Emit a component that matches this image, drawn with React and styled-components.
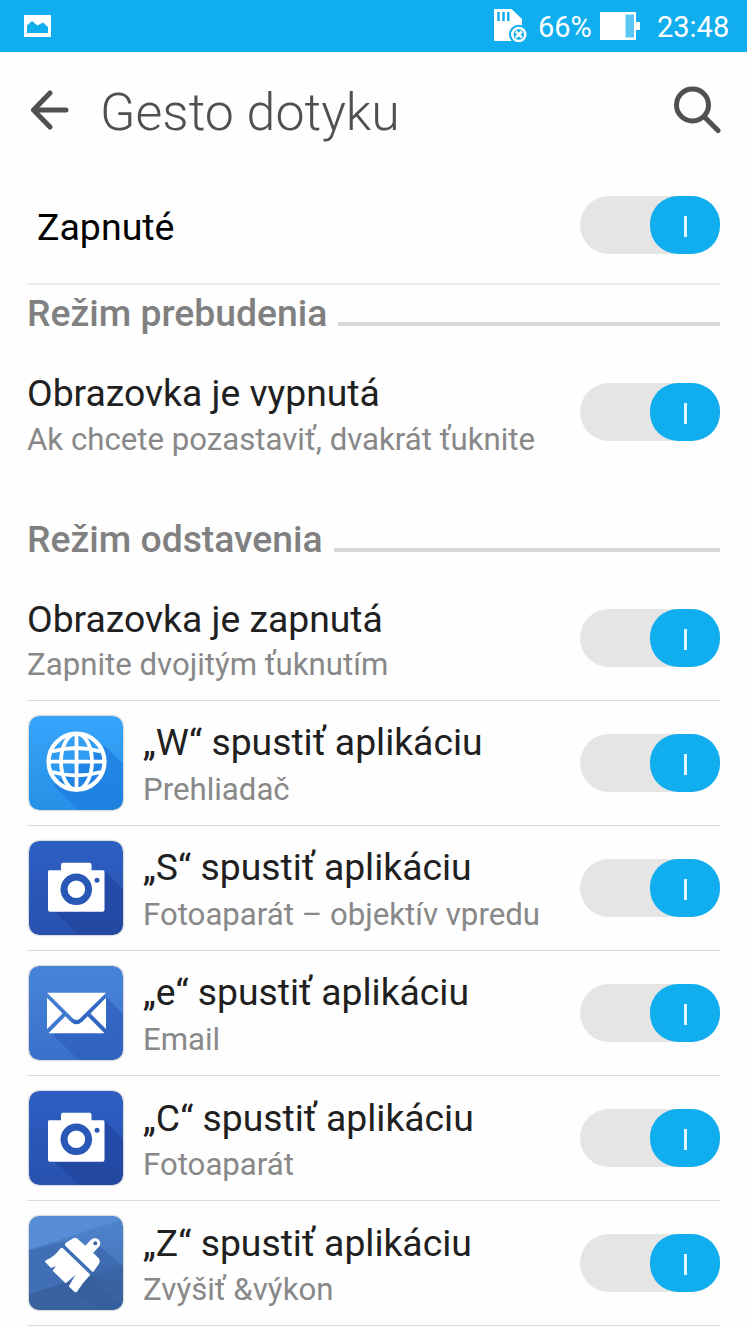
import React, { useState } from "react";
import styled, { createGlobalStyle } from "styled-components";

const apps = [
  { id: "w", icon: "browser", title: "„W“ spustiť aplikáciu", desc: "Prehliadač" },
  { id: "s", icon: "camera", title: "„S“ spustiť aplikáciu", desc: "Fotoaparát – objektív vpredu" },
  { id: "e", icon: "email", title: "„e“ spustiť aplikáciu", desc: "Email" },
  { id: "c", icon: "camera", title: "„C“ spustiť aplikáciu", desc: "Fotoaparát" },
  { id: "z", icon: "boost", title: "„Z“ spustiť aplikáciu", desc: "Zvýšiť &výkon" },
];

const tileColors = {
  browser: ["#37a5fb", "#2590e6", "#1b77dc"],
  camera: ["#2d5fc3", "#2852ae", "#20429a"],
  email: ["#4785d8", "#3a70ca", "#2b5abb"],
  boost: ["#4f84cc", "#3f6caf", "#3a649f"],
};

const Glyph = ({ name }) => {
  if (name === "browser") {
    return (
      <g fill="none" stroke="#fff" strokeWidth="3.8">
        <circle cx="47.5" cy="45.7" r="28" strokeWidth="4.2" />
        <ellipse cx="47.5" cy="45.7" rx="15.5" ry="28" />
        <path d="M47.5 18v56M19 45.7h57M23 35.500q24.500-7 49 0M23 56q24.500 7 49 0" />
      </g>
    );
  }
  if (name === "camera") {
    return (
      <>
        <path
          d="M20 29.3h12v-5.600q0-2 2-2h26.500q2 0 2 2v5.600H74q1.500 0 1.500 1.500V68.700q0 2-2 2H21q-2 0-2-2V30.800q0-1.500 1-1.500z"
          fill="#fff"
        />
        <circle cx="47.3" cy="48.3" r="12.3" fill="#fff" stroke="#2a58b7" strokeWidth="7" />
        <circle cx="68" cy="39.3" r="2.5" fill="#2a58b7" />
      </>
    );
  }
  if (name === "email") {
    return (
      <g fill="#fff">
        <path d="M18 26.700h59L51.500 52q-4 4-8 0z" />
        <path d="M18 31.800 33.500 47.500 18 63zM77 31.800 61.500 47.500 77 63z" />
        <path d="M36.300 50.300 41.500 55.500q6 5.500 12 0L58.700 50.300 75.500 67.300h-56z" />
      </g>
    );
  }
  return (
    <g transform="translate(1 4) scale(.3333)">
      <path
        d="M108 68 130 55q8-4 14 3l22 19 16-17c16-14 38 3 25 20l-18 18 17 17q6 7 1 16l-18 26L106 77q-3-5 2-9z"
        fill="#fff"
      />
      <path
        d="M98 84 181 164Q158 188 141 215q-3 4-8 0l-17-16 21-35-30 26L68 152l9-14-14 6-17-17q-3-4 2-6 24-10 42-34 4-6 8-3z"
        fill="#fff"
      />
      <circle cx="196" cy="70" r="6" fill="#3c689f" />
    </g>
  );
};

const AppIcon = ({ name }) => {
  const [top, bottom, shade] = tileColors[name];
  return (
    <Tile viewBox="0 0 94 94">
      <defs>
        <linearGradient id={`bg-${name}`} x1="0" y1="0" x2="0" y2="1">
          <stop offset="0" stopColor={top} />
          <stop offset="1" stopColor={bottom} />
        </linearGradient>
        <clipPath id={`clip-${name}`}>
          <rect width="94" height="94" rx="10" />
        </clipPath>
      </defs>
      <g clipPath={`url(#clip-${name})`}>
        <rect width="94" height="94" fill={`url(#bg-${name})`} />
        {name === "boost" ? (
          <>
            <path d="M0 0H94V3L0 34z" fill="#578cd7" />
            <path d="M0 34 35 26 94 60V94H0z" fill="#416fb5" />
            <path d="M0 78 94 49V94H0z" fill="#3a629e" />
            <path d="M69 29 94 50V66L62 60z" fill="#3a67ab" opacity=".7" />
            <path d="M58 60 94 90V94H70L48 77z" fill="#335c9a" opacity=".4" />
          </>
        ) : (
          <path d="M76 30 94 48V94H50L24 69z" fill={shade} opacity=".6" />
        )}
      </g>
      <Glyph name={name} />
    </Tile>
  );
};

const Toggle = () => {
  const [on, setOn] = useState(true);
  return (
    <Track role="switch" aria-checked={on} $on={on} onClick={() => setOn(!on)}>
      <Knob $on={on}>
        <Mark />
      </Knob>
    </Track>
  );
};

const App = () => {
  return (
    <>
      <GlobalStyle />
      <Screen>
        <StatusBar>
          <StatusIcon $w={27} $h={22} $mr={443} viewBox="0 0 27 22">
            <path d="M0 0h27v22H0z" fill="#fff" />
            <path d="M3 18V10.500L8 6l5.500 4.500L19 7.500l5 4.500v6z" fill="#10aeee" />
          </StatusIcon>
          <StatusIcon $w={33} $h={34} $mr={11} viewBox="0 0 33 34">
            <path d="M1 0h16.500L28 10v22H1q-1 0-1-1V1q0-1 1-1z" fill="#fff" />
            <path d="M4.500 3v9M9.500 3v9M14.300 3v9" stroke="#10aeee" strokeWidth="2.5" />
            <circle cx="24.8" cy="25.5" r="9.8" fill="#10aeee" />
            <circle cx="24.8" cy="25.5" r="6.5" fill="none" stroke="#fff" strokeWidth="2.5" />
            <path d="m21.700 22.400 6.200 6.200m0-6.200-6.200 6.200" stroke="#fff" strokeWidth="2.6" />
          </StatusIcon>
          <StatusText $w={62}>66%</StatusText>
          <StatusIcon $w={40} $h={28} $mr={17} viewBox="0 0 40 28">
            <path d="M0 0h36v10h4v8h-4v10H0z" fill="#fff" />
            <path d="M25.500 2.500H34v23h-8.500z" fill="#5cc6f2" />
          </StatusIcon>
          <StatusText>23:48</StatusText>
        </StatusBar>

        <Header>
          <BackIcon viewBox="0 0 40 40">
            <path d="M21 3 4.500 20 21 37M4.500 20H37" />
          </BackIcon>
          <Title>Gesto dotyku</Title>
          <SearchIcon viewBox="0 0 48 48">
            <circle cx="19.5" cy="19" r="16" />
            <path d="M31.500 31 45 44.500" strokeLinecap="round" />
          </SearchIcon>
        </Header>

        <Content>
          <MainRow>
            <MainName>Zapnuté</MainName>
            <Toggle />
          </MainRow>

          <Section>
            <SectionName>Režim prebudenia</SectionName>
            <Rule />
          </Section>
          <ModeRow $h={166.1}>
            <Texts>
              <Name>Obrazovka je vypnutá</Name>
              <Desc>Ak chcete pozastaviť, dvakrát ťuknite</Desc>
            </Texts>
            <Toggle />
          </ModeRow>

          <Section>
            <SectionName>Režim odstavenia</SectionName>
            <Rule />
          </Section>
          <ModeRow $h={130.7} $line>
            <Texts>
              <Name>Obrazovka je zapnutá</Name>
              <Desc>Zapnite dvojitým ťuknutím</Desc>
            </Texts>
            <Toggle />
          </ModeRow>

          {apps.map((item) => (
            <AppRow key={item.id}>
              <AppIcon name={item.icon} />
              <AppTexts>
                <Name>{item.title}</Name>
                <Desc>{item.desc}</Desc>
              </AppTexts>
              <Toggle />
            </AppRow>
          ))}
        </Content>
      </Screen>
    </>
  );
};

const GlobalStyle = createGlobalStyle`
  * {
    box-sizing: border-box;
  }
  body {
    margin: 0;
    background: #fdfdfd;
    overflow: hidden;
  }
`;

const Screen = styled.main`
  width: 747px;
  height: 1328px;
  overflow: hidden;
  background: #fefefe;
  font-family: Roboto, sans-serif;
`;

const StatusBar = styled.div`
  display: flex;
  align-items: center;
  height: 52px;
  padding-left: 24px;
  background: #10aeee;
`;

const StatusIcon = styled.svg`
  flex: none;
  width: ${({ $w }) => $w}px;
  height: ${({ $h }) => $h}px;
  margin-right: ${({ $mr }) => $mr}px;
`;

const StatusText = styled.span`
  width: ${({ $w }) => ($w ? `${$w}px` : "auto")};
  padding-top: 2px;
  color: #fff;
  font-size: 29px;
  line-height: 34px;
  white-space: nowrap;
`;

const Header = styled.header`
  display: flex;
  align-items: center;
  height: 116px;
  padding: 0 26px 0 29px;
`;

const BackIcon = styled.svg`
  width: 40px;
  height: 40px;
  fill: none;
  stroke: #505050;
  stroke-width: 5;
  stroke-linecap: round;
  stroke-linejoin: round;
`;

const Title = styled.h1`
  flex: 1;
  margin: 6px 0 0 31px;
  color: #505050;
  font-size: 51.9px;
  font-weight: 300;
  line-height: 64px;
`;

const SearchIcon = styled.svg`
  width: 48px;
  height: 48px;
  fill: none;
  stroke: #505050;
  stroke-width: 5;
`;

const Content = styled.div`
  padding: 0 27px;
`;

const MainRow = styled.div`
  display: flex;
  align-items: center;
  justify-content: space-between;
  height: 117px;
  padding: 0 0 1px 10px;
  border-bottom: 2px solid #ececec;
`;

const Section = styled.div`
  display: flex;
  height: 59.5px;
`;

const SectionName = styled.h2`
  margin: 5px 11px 0 0;
  color: #808080;
  font-size: 37.3px;
  font-weight: 500;
  line-height: 47px;
  white-space: nowrap;
`;

const Rule = styled.div`
  flex: 1;
  height: 4px;
  margin-top: 37px;
  background: #d8d8d8;
`;

const ModeRow = styled.div`
  display: flex;
  justify-content: space-between;
  height: ${({ $h }) => $h}px;
  padding-top: 38.5px;
  border-bottom: ${({ $line }) => ($line ? "1px solid #dcdcdc" : "none")};
`;

const AppRow = styled.div`
  display: flex;
  height: 125.15px;
  padding-top: 33px;
  border-bottom: 1px solid #dcdcdc;
`;

const Tile = styled.svg`
  flex: none;
  width: 94px;
  height: 94px;
  margin: -18px 20px 0 2px;
  border-radius: 10px;
  box-shadow: 0 0 2px rgba(0, 0, 0, 0.5);
`;

const Texts = styled.div`
  margin-top: -13px;
`;

const AppTexts = styled.div`
  flex: 1;
  margin-top: -14.6px;

  > :last-child {
    margin-top: 1.2px;
  }
`;

const Name = styled.div`
  color: #202020;
  font-size: 37.3px;
  line-height: 46.5px;
  white-space: nowrap;
`;

const MainName = styled(Name)`
  padding-top: 4px;
  color: #000;
  font-size: 37.5px;
`;

const Desc = styled.div`
  color: #888;
  font-size: 31.2px;
  line-height: 46.5px;
  white-space: nowrap;
`;

const Track = styled.div`
  display: flex;
  flex: none;
  justify-content: ${({ $on }) => ($on ? "flex-end" : "flex-start")};
  width: 140px;
  height: 58px;
  border-radius: 29px;
  background: #e5e5e5;
`;

const Knob = styled.div`
  display: flex;
  align-items: center;
  justify-content: center;
  width: 70px;
  height: 58px;
  border-radius: 28px;
  background: ${({ $on }) => ($on ? "#10aeee" : "#bdbdbd")};
`;

const Mark = styled.div`
  width: 3px;
  height: 21px;
  margin-top: 3px;
  background: #e2f6fe;
`;

export default App;
